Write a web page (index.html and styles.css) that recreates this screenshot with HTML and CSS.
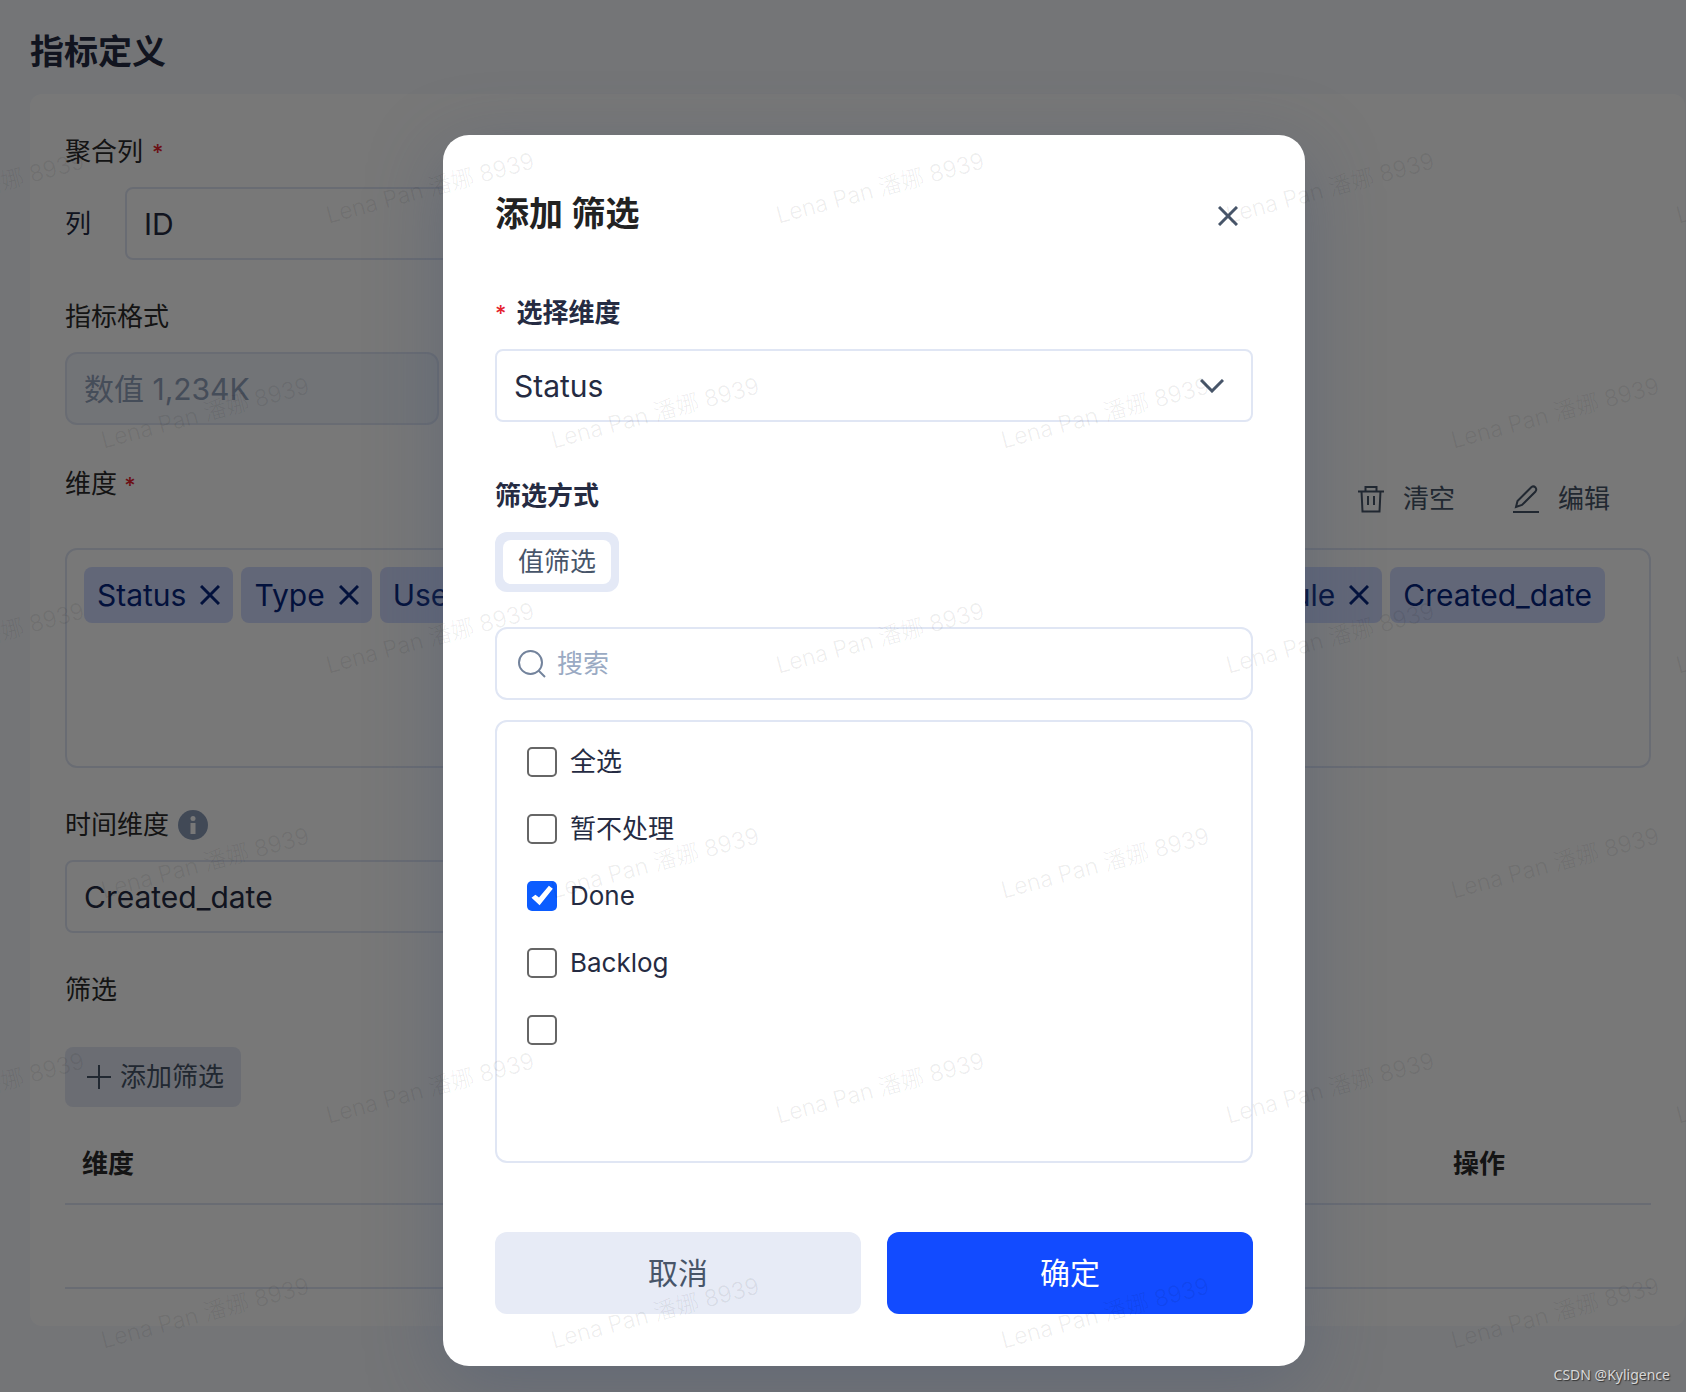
FILE: index.html
```html
<!DOCTYPE html>
<html lang="zh-CN">

<head>
  <meta charset="UTF-8">
  <meta name="viewport" content="width=device-width, initial-scale=1.0">
  <title>指标定义</title>

  <link rel="stylesheet" href="styles.css">
</head>

<body>

  <main class="page">
    <h1>指标定义</h1>

    <div class="card">
      <div class="field">
        <label for="column">聚合列 <span class="required">*</span></label>
        <div class="column-row">
          <span>列</span>
          <select id="column" class="control">
            <option>ID</option>
          </select>
        </div>
      </div>

      <div class="field">
        <label for="format">指标格式</label>
        <input type="text" id="format" class="control format-input" placeholder="数值 1,234K" disabled>
      </div>

      <div class="field">
        <div class="field-header">
          <span class="label">维度 <span class="required">*</span></span>
          <div class="toolbar">
            <button type="button">
              <svg width="26" height="28" viewBox="0 0 26 28" fill="none" stroke="currentColor" stroke-width="2">
                <path d="M0 6.500H26M7.500 6V2H18.500V6M3.500 6L4.500 26.500H21.500L22.500 6M10 11V20M16 11V20" />
              </svg>
              清空
            </button>
            <button type="button">
              <svg width="26" height="28" viewBox="0 0 26 28" fill="none" stroke="currentColor" stroke-width="2">
                <path d="M0 27H26M3 22L4.500 16L18.500 2Q20.500 0.500 22.500 2.500Q24 4.500 22.500 6.500L9 20Z" />
              </svg>
              编辑
            </button>
          </div>
        </div>
        <div class="tag-box">
          <span class="tag">Status
            <button type="button" aria-label="移除 Status"><svg width="20" height="20" viewBox="0 0 20 20"><path d="M1 1L19 19M19 1L1 19" /></svg></button>
          </span>
          <span class="tag">Type
            <button type="button" aria-label="移除 Type"><svg width="20" height="20" viewBox="0 0 20 20"><path d="M1 1L19 19M19 1L1 19" /></svg></button>
          </span>
          <span class="tag">User
            <button type="button" aria-label="移除 User"><svg width="20" height="20" viewBox="0 0 20 20"><path d="M1 1L19 19M19 1L1 19" /></svg></button>
          </span>
          <span class="tag push">Module
            <button type="button" aria-label="移除 Module"><svg width="20" height="20" viewBox="0 0 20 20"><path d="M1 1L19 19M19 1L1 19" /></svg></button>
          </span>
          <span class="tag">Created_date</span>
        </div>
      </div>

      <div class="field">
        <label for="timeDimension">时间维度
          <svg class="info" width="30" height="30" viewBox="0 0 30 30">
            <circle cx="15" cy="15" r="15" fill="#8b9cb8" />
            <circle cx="15" cy="8.500" r="2.500" fill="#fff" />
            <path d="M12.500 13H17.500V24H12.500Z" fill="#fff" />
          </svg>
        </label>
        <select id="timeDimension" class="control time-select">
          <option>Created_date</option>
        </select>
      </div>

      <div class="field">
        <span class="label">筛选</span>
        <button type="button" class="add-button">
          <svg width="24" height="24" viewBox="0 0 24 24" stroke="currentColor" stroke-width="2">
            <path d="M12 0V24M0 12H24" />
          </svg>
          添加筛选
        </button>
        <table>
          <thead>
            <tr>
              <th>维度</th>
              <th class="action">操作</th>
            </tr>
          </thead>
          <tbody>
            <tr>
              <td></td>
              <td></td>
            </tr>
          </tbody>
        </table>
      </div>
    </div>
  </main>

  <div class="overlay">
    <form class="modal" role="dialog" aria-labelledby="modalTitle">
      <div class="modal-header">
        <h2 id="modalTitle">添加 筛选</h2>
        <button type="button" class="close" aria-label="关闭">
          <svg width="20" height="20" viewBox="0 0 20 20">
            <path d="M1 1L19 19M19 1L1 19" />
          </svg>
        </button>
      </div>

      <label for="dimension"><span class="required">*</span> 选择维度</label>
      <div class="select-wrap">
        <select id="dimension" class="control">
          <option>Status</option>
        </select>
        <svg class="chevron" width="24" height="14" viewBox="0 0 24 14">
          <path d="M1 1L12 12L23 1" />
        </svg>
      </div>

      <span class="label method-label">筛选方式</span>
      <div class="segment">
        <button type="button">值筛选</button>
      </div>

      <div class="control search">
        <svg width="28" height="28" viewBox="0 0 28 28" fill="none" stroke="#73839c" stroke-width="2">
          <circle cx="12.500" cy="12.500" r="11.500" />
          <path d="M20.500 20.500L27 27" />
        </svg>
        <input type="search" placeholder="搜索" aria-label="搜索">
      </div>

      <div class="options">
        <label><input type="checkbox">全选</label>
        <label><input type="checkbox">暂不处理</label>
        <label><input type="checkbox" checked>Done</label>
        <label><input type="checkbox">Backlog</label>
        <label><input type="checkbox" aria-label="空值"></label>
      </div>

      <div class="modal-footer">
        <button type="button" class="cancel">取消</button>
        <button type="submit" class="confirm">确定</button>
      </div>
    </form>
  </div>

  <div class="watermark" aria-hidden="true">
    <div class="watermark-row"><span>Lena Pan 潘娜 8939</span><span>Lena Pan 潘娜 8939</span><span>Lena Pan 潘娜 8939</span><span>Lena Pan 潘娜 8939</span><span>Lena Pan 潘娜 8939</span></div>
    <div class="watermark-row"><span>Lena Pan 潘娜 8939</span><span>Lena Pan 潘娜 8939</span><span>Lena Pan 潘娜 8939</span><span>Lena Pan 潘娜 8939</span></div>
    <div class="watermark-row"><span>Lena Pan 潘娜 8939</span><span>Lena Pan 潘娜 8939</span><span>Lena Pan 潘娜 8939</span><span>Lena Pan 潘娜 8939</span><span>Lena Pan 潘娜 8939</span></div>
    <div class="watermark-row"><span>Lena Pan 潘娜 8939</span><span>Lena Pan 潘娜 8939</span><span>Lena Pan 潘娜 8939</span><span>Lena Pan 潘娜 8939</span></div>
    <div class="watermark-row"><span>Lena Pan 潘娜 8939</span><span>Lena Pan 潘娜 8939</span><span>Lena Pan 潘娜 8939</span><span>Lena Pan 潘娜 8939</span><span>Lena Pan 潘娜 8939</span></div>
    <div class="watermark-row"><span>Lena Pan 潘娜 8939</span><span>Lena Pan 潘娜 8939</span><span>Lena Pan 潘娜 8939</span><span>Lena Pan 潘娜 8939</span></div>
  </div>

  <div class="credit">CSDN @Kyligence</div>

</body>

</html>
```

FILE: styles.css
```css
* {
  box-sizing: border-box;
}

body {
  position: relative;
  min-height: 100vh;
  margin: 0;
  background-color: #f6f8fd;
  color: #2c2c2c;
  font-family: Inter, "Noto Sans CJK SC", sans-serif;
  font-size: 26px;
  line-height: 36px;
}

button,
input,
select {
  margin: 0;
  font: inherit;
  color: inherit;
}

button {
  padding: 0;
  border: none;
  background: none;
  cursor: pointer;
}

svg {
  display: block;
  flex-shrink: 0;
}

/* Page behind the dialog */
.page {
  padding: 25px 1px 67px 30px;
}

h1 {
  margin: 0 0 15px;
  color: #252b42;
  font-size: 34px;
  font-weight: 600;
  line-height: 54px;
}

.card {
  padding: 40px 34px 37px 35px;
  border-radius: 12px;
  background-color: #fff;
}

.field + .field {
  margin-top: 39px;
}

.field > label,
.field > .label {
  display: flex;
  align-items: center;
  gap: 9px;
  margin-bottom: 17px;
}

.required {
  color: #e5232e;
  font-size: 22px;
  font-weight: 500;
}

.control {
  display: block;
  width: 100%;
  height: 73px;
  padding: 0 17px;
  border: 2px solid #e0e6f4;
  border-radius: 8px;
  appearance: none;
  background-color: #fff;
  color: #252b42;
  font-size: 30px;
}

.column-row {
  display: flex;
  align-items: center;
  gap: 34px;
  width: 600px;
  color: #252b42;
}

.format-input {
  width: 374px;
  border-radius: 12px;
  background-color: #f3f6fc;
}

.format-input::placeholder {
  color: #94a3bd;
}

.time-select {
  width: 600px;
}

.field-header {
  display: flex;
  justify-content: space-between;
  min-height: 67px;
  margin-bottom: 17px;
  padding-top: 2px;
}

.toolbar {
  display: flex;
  align-items: center;
  gap: 58px;
  padding-right: 41px;
}

.toolbar button {
  display: flex;
  align-items: center;
  gap: 19px;
  color: #475569;
}

.tag-box {
  display: flex;
  gap: 8px;
  min-height: 220px;
  padding: 17px 44px 17px 17px;
  border: 2px solid #e0e6f4;
  border-radius: 12px;
}

.tag {
  display: flex;
  align-items: center;
  gap: 14px;
  height: 56px;
  padding: 0 13px;
  border-radius: 8px;
  background-color: #d1dbff;
  color: #06267f;
  font-size: 30px;
}

.tag.push {
  margin-left: auto;
}

.tag svg,
.close svg,
.chevron {
  fill: none;
  stroke: currentColor;
  stroke-width: 3;
}

.add-button {
  display: flex;
  align-items: center;
  gap: 9px;
  height: 60px;
  margin-top: 39px;
  padding: 0 17px 0 22px;
  border-radius: 8px;
  background-color: #e4e8f5;
  color: #475569;
}

table {
  width: 100%;
  margin-top: 17px;
  border-collapse: collapse;
}

th,
td {
  height: 80px;
  padding: 0 17px;
  border-bottom: 2px solid #e0e6f4;
  font-weight: 600;
  text-align: left;
}

td {
  height: 84px;
}

.action {
  width: 215px;
}

/* Dialog */
.overlay {
  position: absolute;
  inset: 0;
  display: flex;
  justify-content: center;
  align-items: flex-start;
  padding: 135px 0 26px 62px;
  overflow: hidden;
  background-color: rgba(0, 0, 0, 0.53);
}

.modal {
  width: 862px;
  padding: 52px;
  border-radius: 26px;
  background-color: #fff;
  box-shadow: 0 18px 74px rgba(70, 85, 115, 0.4);
  color: #252b42;
}

.modal > label,
.modal > .label {
  display: flex;
  gap: 10px;
  margin-bottom: 18px;
  font-weight: 600;
}

.modal-header {
  display: flex;
  justify-content: space-between;
  align-items: center;
  margin-bottom: 54px;
}

h2 {
  margin: 0;
  color: #222;
  font-size: 34px;
  font-weight: 600;
  line-height: 54px;
}

.close {
  padding: 18px 15px 14px;
  color: #475569;
}

.select-wrap {
  position: relative;
}

.chevron {
  position: absolute;
  top: 30px;
  right: 29px;
  color: #475569;
  pointer-events: none;
}

.modal > .method-label {
  margin-top: 56px;
}

.segment {
  display: inline-flex;
  padding: 8px;
  border-radius: 12px;
  background-color: #e4e9f6;
}

.segment button {
  height: 44px;
  padding: 0 15px;
  border-radius: 8px;
  background-color: #fff;
  color: #475569;
}

.search {
  display: flex;
  align-items: center;
  gap: 11px;
  margin-top: 35px;
  padding: 0 21px;
  border-radius: 12px;
}

.search input {
  width: 100%;
  padding: 0;
  border: none;
  outline: none;
  background: none;
  font-size: 26px;
}

.search input::placeholder {
  color: #9aaac3;
}

.options {
  display: flex;
  flex-direction: column;
  gap: 37px;
  height: 443px;
  margin-top: 20px;
  padding: 25px 30px;
  overflow: auto;
  border: 2px solid #e0e6f4;
  border-radius: 12px;
}

.options label {
  display: flex;
  align-items: center;
  gap: 13px;
  line-height: 30px;
}

.options input {
  width: 30px;
  height: 30px;
  border: 2px solid #666;
  border-radius: 5px;
  appearance: none;
  background-color: #fff;
}

.options input:checked {
  border: none;
  background-color: #0b5cff;
}

.options input:checked::before {
  content: "";
  display: block;
  width: 30px;
  height: 30px;
  background-color: #fff;
  clip-path: polygon(15% 56%, 28% 46%, 40% 55%, 73% 16%, 86% 26%, 42% 81%);
}

.modal-footer {
  display: flex;
  gap: 26px;
  margin-top: 69px;
}

.modal-footer button {
  flex: 1;
  height: 82px;
  border-radius: 12px;
  font-size: 30px;
}

.cancel {
  background-color: #e7ebf6;
  color: #475569;
}

.confirm {
  background-color: #124bff;
  color: #fff;
}

/* Watermark across the whole page */
.watermark {
  position: absolute;
  inset: 0;
  padding-top: 75px;
  overflow: hidden;
  color: rgba(0, 0, 0, 0.08);
  font-size: 23px;
  font-weight: 300;
  pointer-events: none;
}

.watermark-row {
  display: flex;
  align-items: center;
  height: 225px;
  margin-left: -245px;
}

.watermark-row:nth-child(even) {
  margin-left: -20px;
}

.watermark-row span {
  flex: 0 0 450px;
  text-align: center;
  transform: rotate(-15deg);
}

.credit {
  position: absolute;
  right: 16px;
  bottom: 6px;
  color: #d8d8d8;
  font-family: "Noto Sans", sans-serif;
  font-size: 14px;
  line-height: 24px;
  text-shadow: 1px 1px 1px #333;
}
```
